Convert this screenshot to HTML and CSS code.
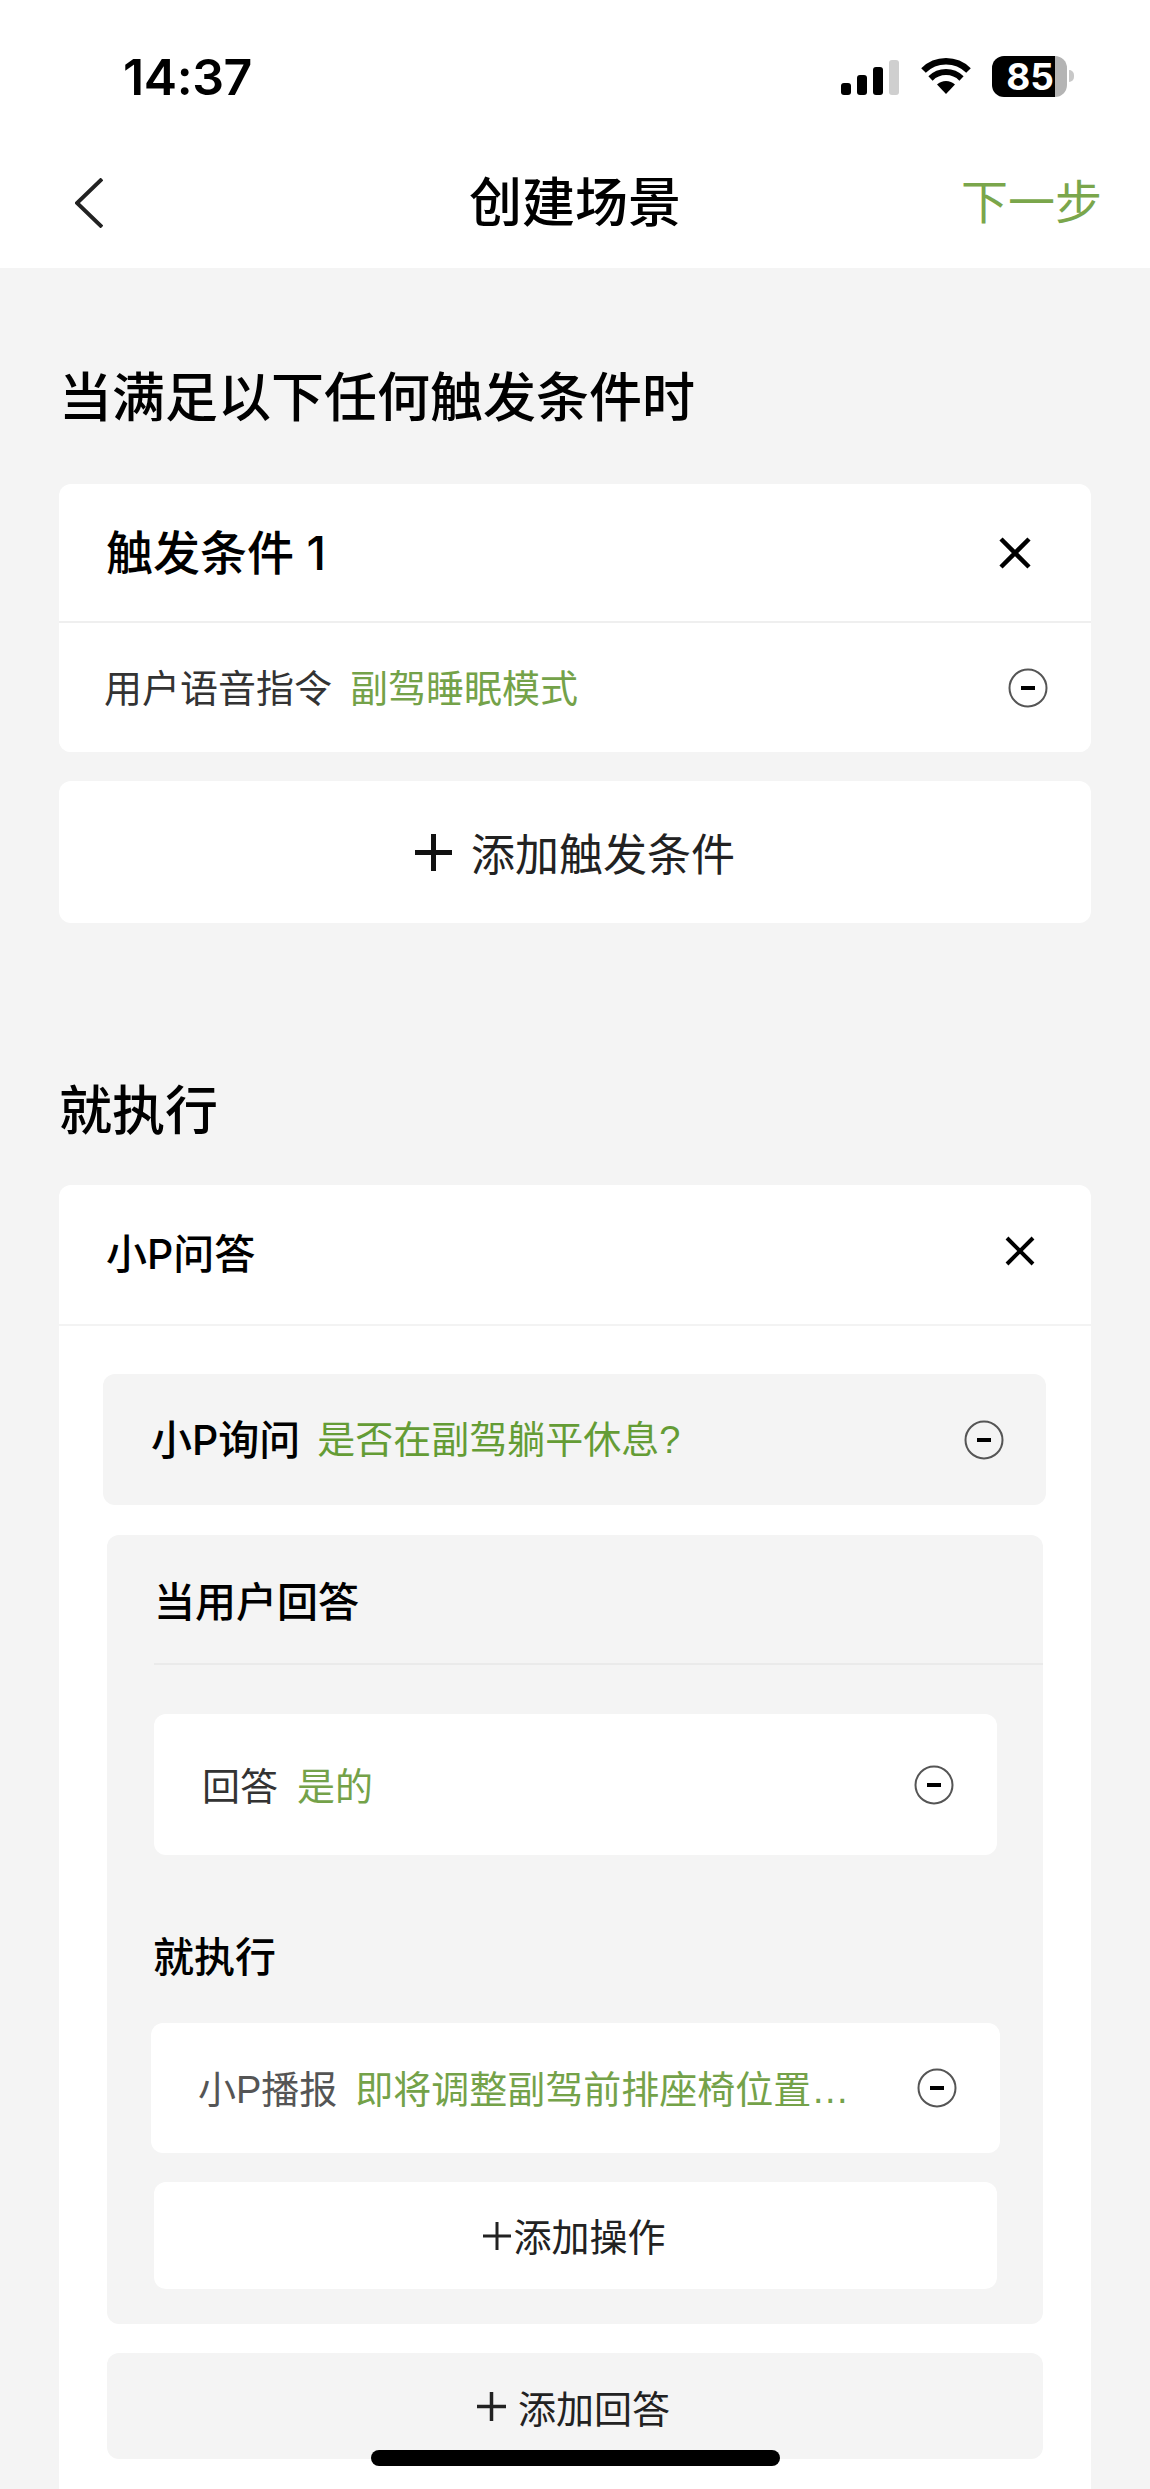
FILE: index.html
```html
<!DOCTYPE html>
<html lang="zh">
<head>
<meta charset="utf-8">
<title>创建场景</title>
<link rel="stylesheet" href="styles.css">
</head>
<body>
<header class="top">
  <div class="status">
    <span class="time">14:37</span>
    <div class="status-icons">
      <svg class="signal" width="58" height="36" viewBox="0 0 58 36"><rect x="0" y="24" width="10" height="12" rx="3"/><rect x="16" y="16" width="10" height="20" rx="3"/><rect x="32" y="8" width="10" height="28" rx="3"/><rect class="off" x="48" y="1" width="10" height="35" rx="3"/></svg>
      <svg class="wifi" width="50" height="36" viewBox="0 0 50 36"><path d="M25 36 16 26.500a13 13 0 0 1 18 0Z"/><path d="M9.500 20.500a22 22 0 0 1 31 0" fill="none" stroke="#000" stroke-width="6"/><path d="M2.500 12.500a32 32 0 0 1 45 0" fill="none" stroke="#000" stroke-width="6.500"/></svg>
      <div class="battery"><span class="battery-fill">85</span><span class="battery-rest"></span></div>
      <span class="battery-nub"></span>
    </div>
  </div>
  <nav class="nav">
    <svg class="back" width="28" height="50" viewBox="0 0 28 50"><path d="M27 1 2 25l25 24" fill="none" stroke="#222" stroke-width="4"/></svg>
    <h1 class="title">创建场景</h1>
    <span class="next">下一步</span>
  </nav>
</header>
<main class="main">
  <h2 class="heading heading-first">当满足以下任何触发条件时</h2>
  <section class="card">
    <div class="card-head">
      <span class="trigger-name">触发条件 1</span>
      <svg class="close" width="32" height="32" viewBox="0 0 32 32"><path d="M2 2l28 28M30 2 2 30" stroke="#000" stroke-width="4.500" fill="none"/></svg>
    </div>
    <div class="row trigger-row">
      <span class="label">用户语音指令</span><span class="value">副驾睡眠模式</span>
      <svg class="minus" width="40" height="40" viewBox="0 0 40 40"><circle cx="20" cy="20" r="18.500"/><path d="M13 20h14"/></svg>
    </div>
  </section>
  <div class="card add-trigger">
    <svg width="37" height="37" viewBox="0 0 37 37"><path d="M18.500 0v37M0 18.500h37" stroke="#111" stroke-width="5"/></svg>
    <span>添加触发条件</span>
  </div>
  <h2 class="heading heading-second">就执行</h2>
  <section class="card qa-card">
    <div class="qa-head">
      <span class="qa-name">小P问答</span>
      <svg class="close" width="30" height="30" viewBox="0 0 30 30"><path d="M2 2l26 26M28 2 2 28" stroke="#000" stroke-width="4" fill="none"/></svg>
    </div>
    <div class="ask">
      <span class="ask-label">小P询问</span><span class="ask-value">是否在副驾躺平休息?</span>
      <svg class="minus" width="40" height="40" viewBox="0 0 40 40"><circle cx="20" cy="20" r="18.500"/><path d="M13 20h14"/></svg>
    </div>
    <div class="answer-box">
      <div class="answer-head">当用户回答</div>
      <div class="row reply">
        <span class="label">回答</span><span class="value">是的</span>
        <svg class="minus" width="40" height="40" viewBox="0 0 40 40"><circle cx="20" cy="20" r="18.500"/><path d="M13 20h14"/></svg>
      </div>
      <div class="then">就执行</div>
      <div class="row speak">
        <span class="label label-soft">小P播报</span><span class="value">即将调整副驾前排座椅位置…</span>
        <svg class="minus" width="40" height="40" viewBox="0 0 40 40"><circle cx="20" cy="20" r="18.500"/><path d="M13 20h14"/></svg>
      </div>
      <div class="add-op">
        <svg width="28" height="28" viewBox="0 0 28 28"><path d="M14 0v28M0 14h28" stroke="#222" stroke-width="3"/></svg>
        <span>添加操作</span>
      </div>
    </div>
    <div class="add-answer">
      <svg width="29" height="29" viewBox="0 0 29 29"><path d="M14.500 0v29M0 14.500h29" stroke="#222" stroke-width="3.500"/></svg>
      <span>添加回答</span>
    </div>
  </section>
</main>
<div class="home-bar"></div>
</body>
</html>
```
FILE: styles.css
```css
* { box-sizing: border-box; }
html, body { margin: 0; padding: 0; }
body {
  width: 1150px;
  height: 2489px;
  overflow: hidden;
  position: relative;
  background: #f4f4f4;
  color: #000;
  font-family: "Liberation Sans", "Noto Sans CJK SC", sans-serif;
}
h1, h2 { margin: 0; font-weight: 500; }

.top { height: 268px; background: #fff; }
.status { height: 118px; position: relative; }
.time {
  position: absolute; left: 123px; top: 48px;
  font-family: Inter, sans-serif; font-size: 50px; font-weight: 600; line-height: 58px; letter-spacing: -0.4px;
}
.status-icons { position: absolute; left: 841px; top: 56px; display: flex; align-items: center; height: 40px; }
.signal { fill: #000; margin-top: 1px; }
.signal .off { fill: #cfcfcf; }
.wifi { margin-left: 22px; }
.battery { margin-left: 21px; width: 75px; height: 41px; display: flex; }
.battery-fill {
  width: 63px; background: #000; color: #fff; border-radius: 12px 0 0 12px;
  font-family: Inter, sans-serif; font-size: 37px; font-weight: 700; line-height: 41px; text-align: right; padding-right: 1px;
}
.battery-rest { flex: 1; background: #b4b4b4; border-radius: 0 12px 12px 0; }
.battery-nub { width: 5px; height: 12px; margin-left: 2px; background: #c8c8c8; border-radius: 0 6px 6px 0; }

.nav { height: 150px; padding: 20px 48px 0 75px; display: flex; align-items: center; justify-content: space-between; position: relative; }
.back { display: block; }
.title { position: absolute; left: 0; right: 0; top: 51px; text-align: center; font-size: 53px; line-height: 70px; }
.next { color: #7aa64b; font-size: 47px; line-height: 60px; }

.main { padding: 0 59px; }
.heading { font-size: 53px; line-height: 60px; height: 60px; }
.heading-first { margin-top: 101px; margin-bottom: 55px; }
.heading-second { margin-top: 159px; margin-bottom: 43px; }

.card { background: #fff; border-radius: 12px; }
.card-head { height: 139px; padding: 0 60px 6px 47px; display: flex; align-items: center; justify-content: space-between; border-bottom: 2px solid #efefef; }
.trigger-name { font-family: Inter, "Noto Sans CJK SC", sans-serif; font-size: 47px; font-weight: 500; }
.card-head .close { margin-top: 6px; }
.row { display: flex; align-items: center; position: relative; background: #fff; }
.label { font-size: 38px; color: #333; }
.label-soft { color: #555; }
.value { font-size: 38px; color: #74a249; margin-left: 18px; }
.minus { fill: none; stroke: #555; margin-left: auto; flex: none; }
.minus circle { stroke-width: 2; }
.minus path { stroke: #000; stroke-width: 4; }
.trigger-row { height: 129px; padding: 0 43px 0 45px; border-radius: 0 0 12px 12px; }
.trigger-row .label, .trigger-row .value { margin-bottom: 5px; }

.add-trigger { margin-top: 29px; height: 142px; display: flex; align-items: center; justify-content: center; font-size: 44px; color: #222; gap: 19px; }

.qa-card { height: 1400px; border-radius: 12px 12px 0 0; }
.qa-head { height: 141px; padding: 0 56px 8px 47px; display: flex; align-items: center; justify-content: space-between; border-bottom: 2px solid #f3f3f3; }
.qa-name { font-family: Inter, "Noto Sans CJK SC", sans-serif; font-size: 41px; font-weight: 500; }
.ask { margin: 48px 45px 0 44px; height: 131px; background: #f4f4f4; border-radius: 12px; padding: 0 42px 0 48px; display: flex; align-items: center; }
.ask-label { font-family: Inter, "Noto Sans CJK SC", sans-serif; font-size: 41px; font-weight: 500; margin-bottom: 6px; }
.ask-value { font-size: 38px; color: #649c35; margin-left: 17px; margin-bottom: 6px; }

.answer-box { margin: 30px 48px 0 48px; padding-bottom: 35px; background: #f4f4f4; border-radius: 12px; }
.answer-head { margin-left: 47px; height: 130px; display: flex; align-items: center; font-size: 41px; font-weight: 500; border-bottom: 2px solid #eaeaea; }
.reply { margin: 49px 46px 0 47px; height: 141px; border-radius: 12px; padding: 0 43px 0 48px; }
.reply .label, .reply .value { margin-bottom: 2px; }
.reply .value { margin-left: 19px; }
.then { margin: 78px 0 40px 46px; height: 50px; line-height: 50px; font-size: 41px; font-weight: 500; }
.speak { margin: 0 43px 0 44px; height: 130px; border-radius: 12px; padding: 0 43px 0 47px; }
.speak .label, .speak .value { margin-bottom: 4px; }
.add-op { margin: 29px 46px 0 47px; height: 107px; background: #fff; border-radius: 12px; display: flex; align-items: center; justify-content: center; font-size: 38px; color: #222; gap: 2px; padding-right: 2px; }
.add-op span { margin-bottom: 2px; }
.add-answer { margin: 29px 48px 0 48px; height: 106px; background: #f4f4f4; border-radius: 12px; display: flex; align-items: center; justify-content: center; font-size: 38px; color: #222; gap: 12px; padding-right: 3px; }

.home-bar { position: absolute; left: 371px; top: 2450px; width: 409px; height: 16px; border-radius: 8px; background: #000; }
```
